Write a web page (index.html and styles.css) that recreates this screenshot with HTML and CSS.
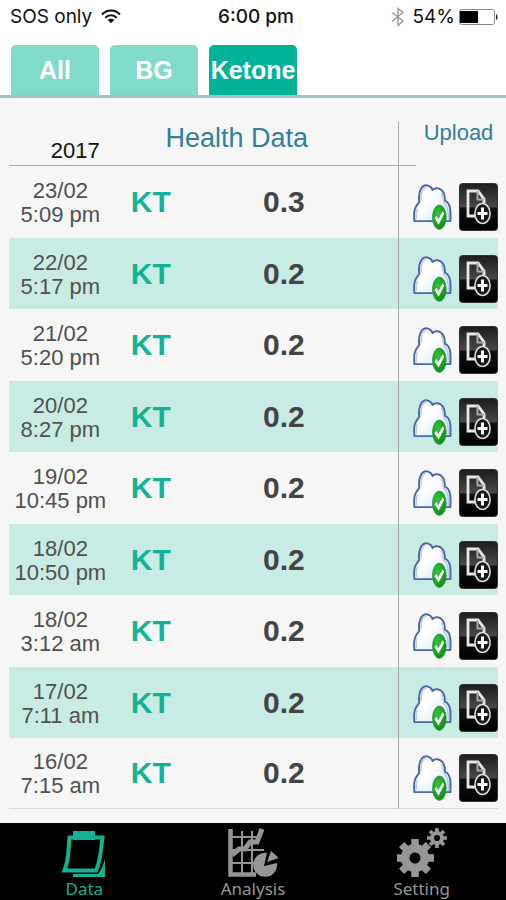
FILE: index.html
```html
<!DOCTYPE html>
<html lang="en">
<head>
    <meta charset="UTF-8">
    <meta name="viewport" content="width=device-width, initial-scale=1.0">
    <title>Health Data</title>
    <link rel="stylesheet" href="styles.css">
</head>
<body>

<!-- Shared icons for the table rows -->
<svg class="sprite" aria-hidden="true">
    <defs>
        <linearGradient id="cloud-fill" x1="0" y1="0" x2="1" y2="1">
            <stop offset="0.4" stop-color="#ffffff"/>
            <stop offset="1" stop-color="#cfe2f8"/>
        </linearGradient>
        <radialGradient id="badge-fill" cx="0.4" cy="0.35" r="0.7">
            <stop offset="0" stop-color="#35c43a"/>
            <stop offset="1" stop-color="#0d8a17"/>
        </radialGradient>
        <symbol id="icon-cloud" viewBox="0 0 40 48">
            <path d="M1.500 38.500C1 34 1 29 2 26C3 22.500 5.500 21 6.500 18.500C5.800 14 6.200 10 7.500 7C9 2.500 12.500 0.800 15.500 2C18 3 19.500 4.500 20 6.500C23 3.500 28 4.500 30.500 8C32.500 11 33 14 32.500 17.500C35.500 18.500 37.800 22 38.300 27C38.600 31 38.500 35 38.300 38.500Z" fill="url(#cloud-fill)" stroke="#4a68a8" stroke-width="2" stroke-linejoin="round"/>
            <path d="M3.500 36.500C3 32 3.500 28 4.500 26M8.500 17C8 11 9 4.500 13.500 3.800M31 18.500C35 21 36.500 26 36.300 36.500M29 9.500C30.500 11.500 31 14 30.800 16.500" fill="none" stroke="#b4cbee" stroke-width="1.500"/>
            <ellipse cx="27" cy="34.500" rx="7" ry="12.500" fill="url(#badge-fill)" stroke="#2c9a35" stroke-width="0.800"/>
            <path d="M22 35.500L24 33L26 36.500L30.500 28L32 31L26.300 42Z" fill="#fff"/>
        </symbol>
        <linearGradient id="tile-fill" x1="0" y1="0" x2="0" y2="1">
            <stop offset="0" stop-color="#1c1c1c"/>
            <stop offset="0.500" stop-color="#484848"/>
            <stop offset="0.520" stop-color="#101010"/>
            <stop offset="1" stop-color="#000000"/>
        </linearGradient>
        <symbol id="icon-note" viewBox="0 0 39 48">
            <rect x="0.500" y="0.500" width="38" height="47" rx="3" fill="url(#tile-fill)" stroke="#333"/>
            <path d="M16 33H9V8H19L25 16V20" fill="none" stroke="#e8e8e8" stroke-width="2.800"/>
            <path d="M18.500 8V16.500H25" fill="none" stroke="#aaa" stroke-width="2"/>
            <ellipse cx="23.500" cy="30.500" rx="7.600" ry="10" fill="#181818" stroke="#dcdcdc" stroke-width="1.600"/>
            <path d="M23.500 24.500V36.500M18.500 30.500H28.500" stroke="#fff" stroke-width="3"/>
        </symbol>
    </defs>
</svg>

<header class="status-bar">
    <div class="status-left">
        <span>SOS only</span>
        <svg class="wifi" viewBox="0 0 20 15" aria-hidden="true">
            <path d="M1 5.500C6 0.200 14 0.200 19 5.500M4.300 8.700C7.500 5.500 12.500 5.500 15.700 8.700" fill="none" stroke="#111" stroke-width="2"/>
            <path d="M6.800 11C8.500 9.200 11.500 9.200 13.200 11L10 14.200Z" fill="#111"/>
        </svg>
    </div>
    <span class="clock">6:00 pm</span>
    <div class="status-right">
        <svg class="bluetooth" viewBox="0 0 14 20" aria-hidden="true">
            <path d="M1 5.500L12 14L7 18.500V1.500L12 5.500L1 14.500" fill="none" stroke="#999" stroke-width="1.400"/>
        </svg>
        <span>54%</span>
        <svg class="battery" viewBox="0 0 39 16" aria-hidden="true">
            <rect x="0.500" y="0.500" width="35" height="15" rx="2" fill="#fff" stroke="#888"/>
            <rect x="1" y="2" width="18" height="12" fill="#000"/>
            <path d="M37 5C39 5.500 39 10.500 37 11Z" fill="#222"/>
        </svg>
    </div>
</header>

<nav class="tabs">
    <button class="tab" type="button">All</button>
    <button class="tab" type="button">BG</button>
    <button class="tab active" type="button">Ketone</button>
</nav>

<main class="content">
    <table class="records">
        <colgroup>
            <col class="col-date">
            <col class="col-type">
            <col>
            <col class="col-actions">
        </colgroup>
        <thead>
            <tr>
                <th class="year" scope="col">2017</th>
                <th class="title" scope="col" colspan="2">Health Data</th>
                <th class="upload" scope="col">Upload</th>
            </tr>
        </thead>
        <tbody id="records-body"></tbody>
    </table>
</main>

<nav class="bottom-bar">
    <a class="bottom-item active" href="#data">
        <svg class="bottom-icon" viewBox="0 0 50 50" aria-hidden="true">
            <path d="M10.500 9.500H43.500C42 20 42 32 37 42.500H5.500C10 32 9.500 20 10.500 9.500Z" fill="none" stroke="currentColor" stroke-width="4"/>
            <path d="M14 3H36V12H14Z" fill="currentColor"/>
            <path d="M46 31V49H14V46H39L43 40Z" fill="currentColor"/>
        </svg>
        <span>Data</span>
    </a>
    <a class="bottom-item" href="#analysis">
        <svg class="bottom-icon" viewBox="0 0 50 50" aria-hidden="true">
            <path d="M2.500 1V46.500H28" fill="none" stroke="currentColor" stroke-width="4.500"/>
            <path d="M14 3V46M24 3V46M4 9H30M4 22H36M4 35H28" fill="none" stroke="currentColor" stroke-width="2"/>
            <path d="M4 27L11 21L17 21L22 14L29 14L34 1" fill="none" stroke="currentColor" stroke-width="5"/>
            <path d="M39 25A12 12 0 1 0 49 35L36 38Z" fill="currentColor"/>
            <path d="M43 23L51 30L39 34Z" fill="currentColor"/>
        </svg>
        <span>Analysis</span>
    </a>
    <a class="bottom-item" href="#setting">
        <svg class="bottom-icon" viewBox="0 0 50 50" aria-hidden="true">
            <g fill="none" stroke="currentColor">
                <circle cx="18" cy="30" r="9.800" stroke-width="8.600"/>
                <path d="M18 11V19M18 41V49M-1 30H7M29 30H37M4.600 16.600L10.200 22.200M25.800 37.800L31.400 43.400M4.600 43.400L10.200 37.800M25.800 22.200L31.400 16.600" stroke-width="7.500"/>
                <circle cx="40" cy="10" r="5" stroke-width="4"/>
                <path d="M40 0V4M40 16V20M30 10H34M46 10H50M33 3L36 6M44 14L47 17M33 17L36 14M44 6L47 3" stroke-width="3.600"/>
            </g>
        </svg>
        <span>Setting</span>
    </a>
</nav>

<script>
    const records = [
        ['23/02', '5:09 pm', '0.3'],
        ['22/02', '5:17 pm', '0.2'],
        ['21/02', '5:20 pm', '0.2'],
        ['20/02', '8:27 pm', '0.2'],
        ['19/02', '10:45 pm', '0.2'],
        ['18/02', '10:50 pm', '0.2'],
        ['18/02', '3:12 am', '0.2'],
        ['17/02', '7:11 am', '0.2'],
        ['16/02', '7:15 am', '0.2']
    ];

    // Build one table row per reading
    document.getElementById('records-body').innerHTML = records.map(([date, time, value]) => `
        <tr>
            <td class="date">${date}<br>${time}</td>
            <td class="type">KT</td>
            <td class="value">${value}</td>
            <td class="actions">
                <div class="action-list">
                    <button class="action" type="button" aria-label="Uploaded">
                        <svg class="action-icon"><use href="#icon-cloud"/></svg>
                    </button>
                    <button class="action" type="button" aria-label="Add note">
                        <svg class="action-icon"><use href="#icon-note"/></svg>
                    </button>
                </div>
            </td>
        </tr>`).join('');
</script>

</body>
</html>
```
FILE: styles.css
```css
* {
    box-sizing: border-box;
}
body {
    display: flex;
    flex-direction: column;
    min-height: 100vh;
    margin: 0;
    background-color: #f6f6f6;
    font-family: "Liberation Sans", Arial, sans-serif;
}
button {
    border: none;
    padding: 0;
    background: none;
    font-family: inherit;
    cursor: pointer;
}
.sprite {
    position: absolute;
    width: 0;
    height: 0;
}

/* Status bar */
.status-bar {
    display: grid;
    grid-template-columns: 1fr auto 1fr;
    align-items: center;
    height: 33px;
    padding: 0 8px 0 10px;
    background-color: #fff;
    color: #111;
    font-family: Inter, sans-serif;
    font-size: 19px;
}
.status-left, .status-right {
    display: flex;
    align-items: center;
    gap: 9px;
}
.status-right {
    justify-content: flex-end;
    gap: 4px;
}
.clock {
    padding-left: 4px;
    font-weight: 500;
}
.wifi {
    width: 20px;
    height: 15px;
}
.bluetooth {
    width: 14px;
    height: 20px;
    margin-right: 4px;
}
.battery {
    width: 39px;
    height: 16px;
}

/* Category tabs */
.tabs {
    display: flex;
    gap: 11px;
    padding: 12px 11px 0;
    background-color: #fff;
    border-bottom: 3px solid #a6bfca;
}
.tab {
    width: 88px;
    height: 50px;
    border-radius: 5px 5px 0 0;
    background-color: #80dbca;
    color: #fff;
    font-size: 25px;
    font-weight: bold;
}
.tab.active {
    background-color: #00b398;
}

/* Readings */
.content {
    flex: 1;
    padding: 24px 8px 13px 9px;
}
.records {
    width: 100%;
    table-layout: fixed;
    border-collapse: separate;
    border-spacing: 0;
}
.col-date {
    width: 21%;
}
.col-type {
    width: 16%;
}
.col-actions {
    width: 100px;
}
th, td {
    padding: 0;
    text-align: center;
}
th {
    height: 44px;
    border-bottom: 1px solid #aaa;
    color: #31809c;
    font-weight: normal;
    line-height: 24px;
    vertical-align: top;
}
.year {
    padding: 17px 0 0 30px;
    color: #111;
    font-size: 22px;
}
.title {
    padding: 4px 36px 0 0;
    font-size: 27px;
}
.upload {
    border-bottom: none;
    border-left: 1px solid #aaa;
    /* Header rule runs a little way past the divider */
    background: linear-gradient(#aaa, #aaa) no-repeat left bottom / 17px 1px;
    padding-left: 20px;
    font-size: 22px;
    line-height: 22px;
}
td {
    height: 71px;
}
tr:nth-child(odd) td {
    height: 72px;
}
tr:nth-child(even) td {
    background-color: #c8ebe3;
}
tbody tr:last-child td {
    height: 71px;
    border-bottom: 1px solid #d8d8d8;
}
.date {
    padding-top: 2px;
    color: #505050;
    font-size: 22px;
    line-height: 24px;
}
.type {
    color: #12b394;
    font-size: 30px;
    font-weight: bold;
}
.value {
    padding-right: 20px;
    color: #444;
    font-size: 30px;
    font-weight: bold;
}
.actions {
    border-left: 1px solid #a0a8a6;
}
.action-list {
    display: flex;
    justify-content: flex-end;
    gap: 7px;
    padding-top: 10px;
}
.action, .action-icon {
    display: block;
    width: 39px;
    height: 48px;
}

/* Bottom navigation */
.bottom-bar {
    display: flex;
    height: 77px;
    background-color: #000;
}
.bottom-item {
    display: flex;
    flex: 1;
    flex-direction: column;
    align-items: center;
    padding-top: 5px;
    color: #969696;
    font-family: "Noto Sans", sans-serif;
    font-size: 17px;
    line-height: 22px;
    text-decoration: none;
}
.bottom-item.active {
    color: #12b394;
}
.bottom-icon {
    width: 50px;
    height: 50px;
}
```
